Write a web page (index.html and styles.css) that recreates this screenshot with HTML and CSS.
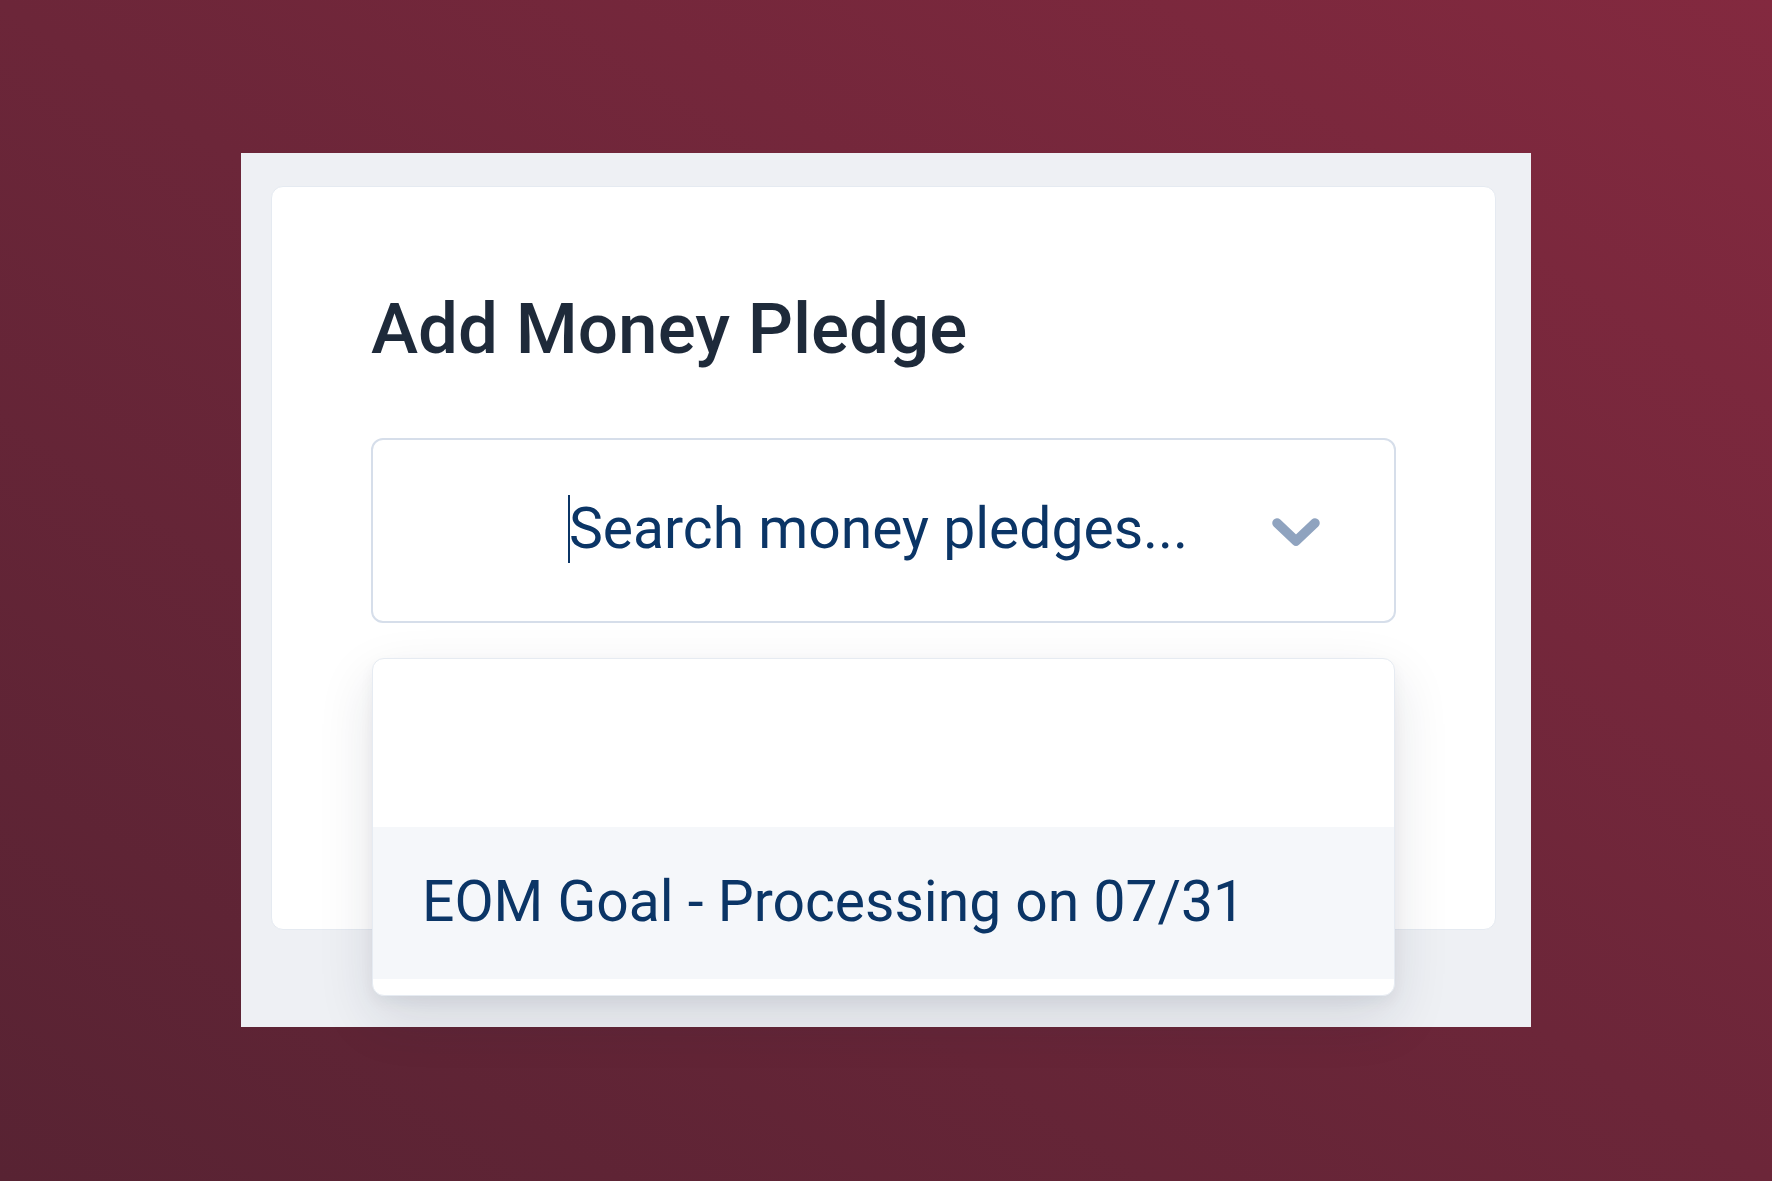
FILE: index.html
```html
<!DOCTYPE html>
<html lang="en">

<head>
  <meta charset="UTF-8">
  <meta name="viewport" content="width=device-width, initial-scale=1.0">
  <title>Add Money Pledge</title>
  <link rel="stylesheet" href="styles.css">
</head>

<body>
  <div class="stage">
    <div class="panel">
      <div class="card">
        <h2>Add Money Pledge</h2>

        <div class="field">
          <div class="search">
            <span class="caret"></span>
            <span class="placeholder">Search money pledges...</span>
            <svg class="chevron" width="48" height="30" viewBox="0 0 48 30">
              <path d="M5 5 L24 23 L43 5" fill="none" stroke="#8fa3bf" stroke-width="9.5" stroke-linecap="round" stroke-linejoin="round" />
            </svg>
          </div>

          <!-- open dropdown list -->
          <ul class="menu">
            <li class="option"></li>
            <li class="option active">EOM Goal - Processing on 07/31</li>
          </ul>
        </div>
      </div>
    </div>
  </div>
</body>

</html>
```

FILE: styles.css
```css
html,
body {
  height: 100%;
}

body {
  margin: 0;
  font-family: Roboto, "Liberation Sans", Arial, sans-serif;
  background: linear-gradient(to top right, #582333 0%, #6c2639 50%, #83293f 100%);
}

.stage {
  padding: 153px 0 0 241px;
}

.panel {
  box-sizing: border-box;
  width: 1290px;
  height: 874px;
  padding: 33px 0 0 30px;
  background-color: #eef0f4;
}

.card {
  box-sizing: border-box;
  width: 1225px;
  height: 744px;
  padding: 100px 0 0 99px;
  background: white;
  border: 1px solid #e5eaf1;
  border-radius: 12px;
}

h2 {
  margin: 0;
  font-size: 71px;
  font-weight: 500;
  line-height: 83px;
  color: #1e2a3a;
}

.field {
  position: relative;
  width: 1025px;
  margin-top: 68px;
}

.search {
  box-sizing: border-box;
  display: flex;
  align-items: center;
  height: 185px;
  padding: 0 74px 0 195px;
  border: 2px solid #d6deea;
  border-radius: 12px;
  background: white;
}

.caret {
  width: 2px;
  height: 68px;
  margin-top: -3px;
  background-color: #0b3566;
}

.placeholder {
  flex: 1;
  margin-left: -1px;
  margin-top: -3px;
  font-size: 57px;
  line-height: 68px;
  color: #0b3566;
}

.chevron {
  margin-top: 4px;
}

.menu {
  box-sizing: border-box;
  position: absolute;
  top: 220px;
  left: 1px;
  width: 1023px;
  margin: 0;
  padding: 16px 0;
  list-style: none;
  background: white;
  border: 1px solid #e6ebf2;
  border-radius: 12px;
  box-shadow: 0 22px 56px rgba(25, 35, 60, 0.12), 0 6px 14px rgba(25, 35, 60, 0.05);
}

.option {
  box-sizing: border-box;
  height: 152px;
  padding: 0 0 4px 49px;
  display: flex;
  align-items: center;
  font-size: 57px;
  color: #0b3566;
}

.option.active {
  background-color: #f5f7fa;
}
```
